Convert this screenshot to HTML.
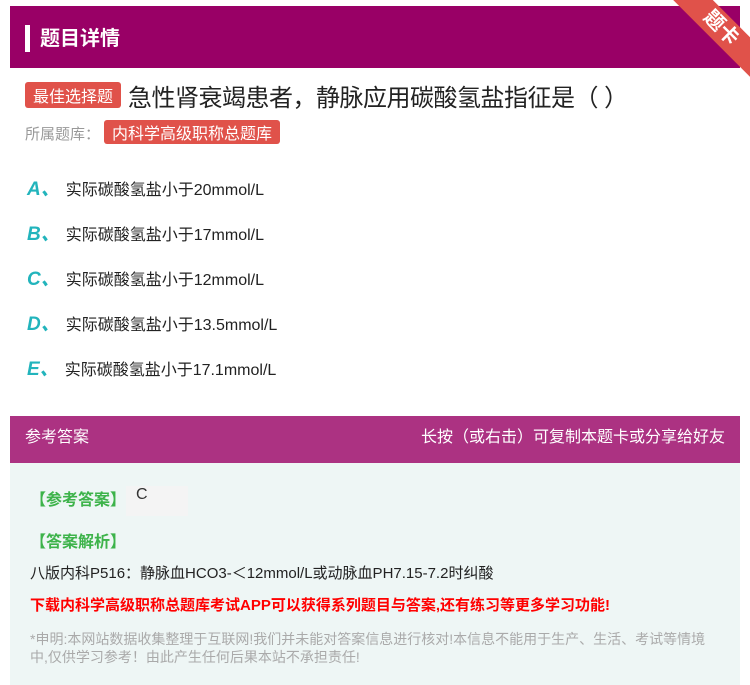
<!DOCTYPE html>
<html><head><meta charset="utf-8"><style>
body{margin:0;width:750px;height:685px;background:#fff;font-family:"Liberation Sans","Noto Sans CJK SC",sans-serif;position:relative;overflow:hidden}
.hdr{position:absolute;left:10px;top:6px;width:730px;height:62px;background:#990066}
.hdr .bar{position:absolute;left:15px;top:19px;width:5px;height:27px;background:#fff}
.hdr .t{position:absolute;left:30px;top:16px;color:#fff;font-size:20px;font-weight:bold}
.rib{position:absolute;right:-36px;top:14px;width:130px;height:28px;background:#e0524a;transform:rotate(45deg);color:#fff;text-align:center;font-size:20px;line-height:28px;font-weight:bold}
.tag{display:inline-block;background:#e0524a;color:#fff;border-radius:3px}
.q{position:absolute;left:25px;top:78px;font-size:24px;color:#222;letter-spacing:-0.5px}
.q .tag{font-size:16px;padding:1px 8px;vertical-align:4px;margin-right:7px;letter-spacing:0}
.src{position:absolute;left:25px;top:120px;font-size:15px;color:#999}
.src .tag{font-size:16px;padding:0 8px;margin-left:4px}
.opt{position:absolute;left:27px;font-size:16px;color:#222}
.opt b{color:#22b4bc;font-style:italic;font-size:19px;margin-right:6px}
.ans{position:absolute;left:10px;top:416px;width:730px;height:269px;background:#eef6f5}
.ah{height:47px;background:#ac3282;color:#fff;font-size:16px;line-height:44px;padding:0 15px}
.ah span{float:right}
.g{position:absolute;left:20px;color:#3db34a;font-weight:bold;font-size:16px}
</style></head><body>
<div class="hdr"><div class="bar"></div><div class="t">题目详情</div></div>
<div class="rib">题卡</div>
<div class="q"><span class="tag">最佳选择题</span>急性肾衰竭患者，静脉应用碳酸氢盐指征是（ ）</div>
<div class="src">所属题库：<span class="tag">内科学高级职称总题库</span></div>
<div class="opt" style="top:174px"><b>A、</b>实际碳酸氢盐小于20mmol/L</div>
<div class="opt" style="top:219px"><b>B、</b>实际碳酸氢盐小于17mmol/L</div>
<div class="opt" style="top:264px"><b>C、</b>实际碳酸氢盐小于12mmol/L</div>
<div class="opt" style="top:309px"><b>D、</b>实际碳酸氢盐小于13.5mmol/L</div>
<div class="opt" style="top:354px"><b>E、</b>实际碳酸氢盐小于17.1mmol/L</div>
<div class="ans">
<div class="ah">参考答案<span>长按（或右击）可复制本题卡或分享给好友</span></div>
<div class="g" style="top:70px">【参考答案】<span style="display:inline-block;width:52px;height:30px;background:#f4f4f4;color:#333;font-weight:normal;vertical-align:middle;text-align:left;padding-left:10px">C</span></div>
<div class="g" style="top:112px">【答案解析】</div>
<div style="position:absolute;left:20px;top:146px;font-size:15px;color:#222">八版内科P516：静脉血HCO3-＜12mmol/L或动脉血PH7.15-7.2时纠酸</div>
<div style="position:absolute;left:20px;top:178px;font-size:15px;color:#f00;font-weight:bold">下载内科学高级职称总题库考试APP可以获得系列题目与答案,还有练习等更多学习功能!</div>
<div style="position:absolute;left:20px;top:214px;width:690px;font-size:14px;color:#aaa;line-height:18px">*申明:本网站数据收集整理于互联网!我们并未能对答案信息进行核对!本信息不能用于生产、生活、考试等情境中,仅供学习参考！由此产生任何后果本站不承担责任!</div>
</div>
</body></html>
